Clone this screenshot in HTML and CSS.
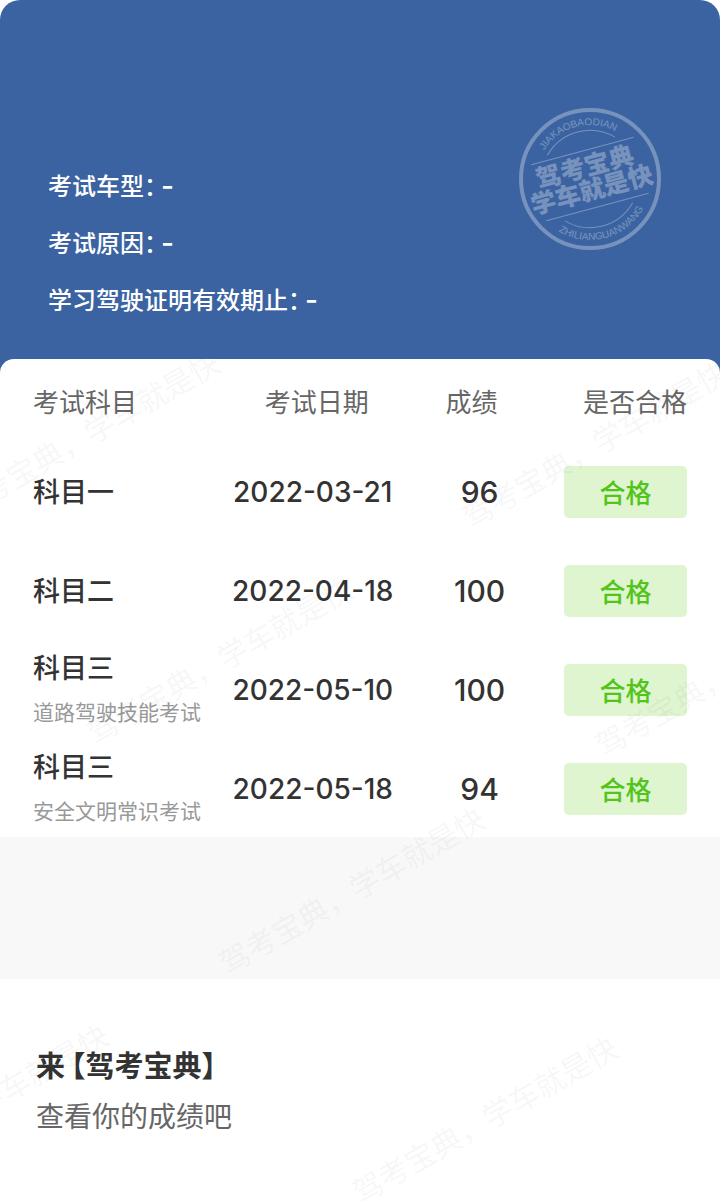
FILE: index.html
```
<!DOCTYPE html>
<html lang="zh-Hans">
  <head>
    <meta charset="UTF-8" />
    <meta name="viewport" content="width=device-width, initial-scale=1.0" />
    <title>考试成绩</title>
    <link rel="stylesheet" href="styles.css">
  </head>
  <body>
    <header class="header">
      <dl class="info">
        <div class="info-row">
          <dt>考试车型：</dt>
          <dd>-</dd>
        </div>
        <div class="info-row">
          <dt>考试原因：</dt>
          <dd>-</dd>
        </div>
        <div class="info-row">
          <dt>学习驾驶证明有效期止：</dt>
          <dd>-</dd>
        </div>
      </dl>
      <svg class="stamp" viewBox="-72 -72 144 144" aria-label="驾考宝典 学车就是快">
        <defs>
          <path id="arcTop" d="M-54 0A54 54 0 0 1 54 0" />
          <path id="arcBottom" d="M-61 0A61 61 0 0 0 61 0" />
        </defs>
        <circle class="stamp-line" r="69" stroke-width="4" />
        <g transform="rotate(-15)">
          <path class="stamp-line" d="M-35 -34A49 49 0 0 1 35 -34M-35 34A49 49 0 0 0 35 34" />
          <path class="stamp-line" d="M-53 -29H53M-53 29H53" />
          <text class="stamp-small"><textPath href="#arcTop" startOffset="50%">JIAKAOBAODIAN</textPath></text>
          <text class="stamp-big" x="-2" y="-4">驾考宝典</text>
          <text class="stamp-big" x="-1" y="20">学车就是快</text>
          <text class="stamp-small"><textPath href="#arcBottom" startOffset="50%">ZHILIANGUANWANG</textPath></text>
        </g>
      </svg>
    </header>

    <main class="content">
      <table class="score-table">
        <thead>
          <tr>
            <th class="col-subject">考试科目</th>
            <th class="col-date">考试日期</th>
            <th class="col-score">成绩</th>
            <th class="col-result">是否合格</th>
          </tr>
        </thead>
        <tbody>
          <tr>
            <td class="subject">科目一</td>
            <td class="date">2022-03-21</td>
            <td class="score">96</td>
            <td class="result"><span class="badge">合格</span></td>
          </tr>
          <tr>
            <td class="subject">科目二</td>
            <td class="date">2022-04-18</td>
            <td class="score">100</td>
            <td class="result"><span class="badge">合格</span></td>
          </tr>
          <tr>
            <td class="subject">科目三<small>道路驾驶技能考试</small></td>
            <td class="date">2022-05-10</td>
            <td class="score">100</td>
            <td class="result"><span class="badge">合格</span></td>
          </tr>
          <tr>
            <td class="subject">科目三<small>安全文明常识考试</small></td>
            <td class="date">2022-05-18</td>
            <td class="score">94</td>
            <td class="result"><span class="badge">合格</span></td>
          </tr>
        </tbody>
      </table>

      <div class="divider"></div>

      <section class="promo">
        <h2>来<span class="brand">【驾考宝典】</span></h2>
        <p>查看你的成绩吧</p>
      </section>

      <!-- 浮水印 -->
      <svg class="watermark" aria-hidden="true">
        <text transform="translate(87 76) rotate(-30)">驾考宝典，学车就是快</text>
        <text transform="translate(595 86) rotate(-30)">驾考宝典，学车就是快</text>
        <text transform="translate(220 302) rotate(-30)">驾考宝典，学车就是快</text>
        <text transform="translate(728 314) rotate(-30)">驾考宝典，学车就是快</text>
        <text transform="translate(352 532) rotate(-30)">驾考宝典，学车就是快</text>
        <text transform="translate(-24 749) rotate(-30)">驾考宝典，学车就是快</text>
        <text transform="translate(485 761) rotate(-30)">驾考宝典，学车就是快</text>
      </svg>
    </main>
  </body>
</html>
```

FILE: styles.css
```
* {
  box-sizing: border-box;
}
body {
  margin: 0;
  background-color: #fff;
  color: #333;
  font-family: Inter, "Noto Sans CJK SC", sans-serif;
}
.header {
  display: flex;
  justify-content: space-between;
  align-items: flex-start;
  padding: 107px 58px 44px 48px;
  background-color: #3c63a1;
  border-radius: 20px 20px 0 0;
  color: #fff;
}
.info {
  margin: 51px 0 0;
  font-size: 24px;
  font-weight: 500;
  line-height: 57px;
}
.info-row {
  display: flex;
  gap: 5px;
}
.info-row dt {
  font-feature-settings: "halt";
}
.info-row dd {
  margin: 0;
  font-size: 28px;
}
.stamp {
  flex: none;
  width: 144px;
  height: 144px;
  opacity: 0.3;
}
.stamp-line {
  fill: none;
  stroke: #fff;
}
.stamp text {
  fill: #fff;
  text-anchor: middle;
}
.stamp-small {
  font-family: "Liberation Sans", sans-serif;
  font-size: 10px;
}
.stamp-big {
  font-size: 25px;
  font-weight: 900;
}
.content {
  position: relative;
  margin-top: -14px;
  background-color: #fff;
  border-radius: 14px 14px 0 0;
  overflow: hidden;
}
.score-table {
  width: 100%;
  border-collapse: collapse;
  table-layout: fixed;
}
.score-table th {
  height: 82px;
  padding: 0;
  color: #666;
  font-size: 26px;
  font-weight: 400;
  text-align: center;
}
.score-table td {
  height: 99px;
  padding: 2px 0 0;
  text-align: center;
}
.score-table .col-subject,
.score-table .subject {
  width: 31%;
  padding-left: 33px;
  text-align: left;
}
.score-table .col-date {
  width: 26%;
}
.score-table .col-score {
  width: 17%;
}
.score-table .col-result,
.score-table .result {
  padding-right: 33px;
  text-align: right;
}
.score-table .subject {
  padding-top: 5px;
  font-size: 27px;
  font-weight: 500;
  line-height: 44px;
  white-space: nowrap;
}
.subject small {
  display: block;
  color: #999;
  font-size: 21px;
  font-weight: 400;
}
.score-table .date {
  padding-right: 8px;
  font-size: 28px;
  font-weight: 500;
}
.score-table .score {
  padding-left: 16px;
  font-size: 30px;
  font-weight: 500;
}
.badge {
  display: inline-block;
  width: 123px;
  height: 52px;
  padding-top: 2px;
  background-color: #def5d0;
  border-radius: 5px;
  color: #52c41a;
  font-size: 26px;
  font-weight: 500;
  line-height: 52px;
  text-align: center;
  vertical-align: middle;
}
.divider {
  height: 142px;
  background-color: #f8f8f8;
}
.promo {
  padding: 63px 36px 59px;
  font-size: 29px;
  line-height: 50px;
}
.promo h2,
.promo p {
  margin: 0;
  font-size: inherit;
}
.promo p {
  color: #666;
  font-size: 28px;
}
.brand {
  margin-left: 6px;
  font-feature-settings: "halt";
}
.watermark {
  position: absolute;
  top: 0;
  left: 0;
  width: 100%;
  height: 100%;
  pointer-events: none;
}
.watermark text {
  fill: rgba(0, 0, 0, 0.05);
  font-size: 30px;
  text-anchor: middle;
  dominant-baseline: central;
}
```
